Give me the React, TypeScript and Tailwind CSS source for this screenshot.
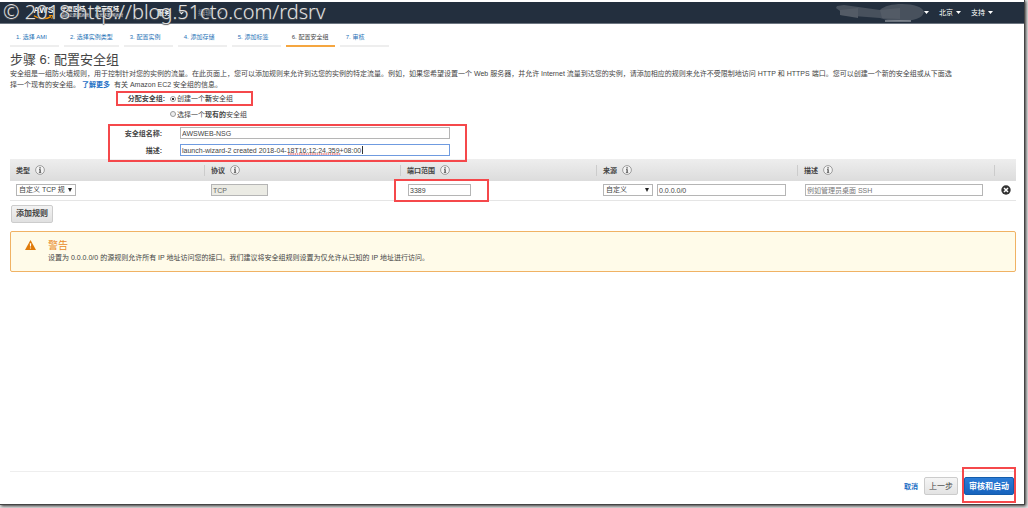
import React, { useState } from 'react';

const STEPS = ['选择 AMI', '选择实例类型', '配置实例', '添加存储', '添加标签', '配置安全组', '审核'];
const ACTIVE_STEP = 5;

const COLUMNS = [
  { label: '类型', width: 'w-[195px]' },
  { label: '协议', width: 'w-[196px]' },
  { label: '端口范围', width: 'w-[196px]' },
  { label: '来源', width: 'w-[201px]' },
  { label: '描述', width: 'w-[197px]' },
];

const Caret: React.FC = () => (
  <svg width="5" height="3" viewBox="0 0 5 3" className="shrink-0"><path d="M0 0h5L2.5 3z" fill="currentColor" /></svg>
);

const Chevron: React.FC = () => (
  <svg width="5" height="4" viewBox="0 0 5 4" className="shrink-0"><path d="M.5.7l2 2 2-2" fill="none" stroke="currentColor" strokeWidth="1.2" /></svg>
);

const InfoIcon: React.FC = () => (
  <svg width="10" height="10" viewBox="0 0 10 10" className="shrink-0">
    <circle cx="5" cy="5" r="4.4" fill="#f3f3f3" stroke="#8a8a8a" strokeWidth=".8" />
    <path d="M4.4 2.2h1.3v1.2H4.4zM4 4.2h1.7v2.9h.5v.7H3.9v-.7h.6V4.9H4z" fill="#444" />
  </svg>
);

const AwsLogo: React.FC = () => (
  <span className="flex flex-col items-center text-[9px] leading-[9px] font-bold text-white">
    AWS
    <svg width="21" height="5" viewBox="0 0 21 5">
      <path d="M1 .8c5 3.6 12 3.8 17 .8" fill="none" stroke="#f90" strokeWidth="1.3" />
      <path d="M16 .6l3.8-.2-1 3.4" fill="none" stroke="#f90" />
    </svg>
  </span>
);

// Red marker frame drawn over the part that the tutorial points at
const Marker: React.FC<{ className: string }> = ({ className }) => (
  <div className={`absolute border-2 border-[#f5484b] pointer-events-none ${className}`} />
);

const Dropdown: React.FC<{ id: string; label: string; text: string; className: string }> = ({ id, label, text, className }) => (
  <span className={`relative inline-flex h-[12px] ${className}`}>
    <select id={id} aria-label={label} className="w-full appearance-none border border-[#b5b5b5] bg-white pl-[2px] pr-[10px] text-[7px] leading-[10px] text-[#444]">
      <option>{text}</option>
    </select>
    <svg width="4" height="4" viewBox="0 0 4 4" className="absolute right-[4px] top-[4px] pointer-events-none"><path d="M0 0h4L2 4z" fill="#222" /></svg>
  </span>
);

const App: React.FC = () => {
  const [mode, setMode] = useState('new');
  const field = 'h-[12px] border border-[#b5b5b5] bg-white px-px text-[7px] leading-[10px] text-[#444] outline-none placeholder:text-[#777]';
  const button = 'h-[18px] rounded-[2px] border px-[4px] text-[8px] whitespace-nowrap';

  return (
    <div className="h-screen min-h-[300px] bg-[#e4e4e4] pr-[3px] pb-[3px] font-['Liberation_Sans','Noto_Sans_CJK_SC',sans-serif] text-[7px] leading-[11px] text-[#444]">
      <div className="flex h-full flex-col border-r border-b border-[#444] bg-white pt-[2px] shadow-[1px_1px_3px_#333]">
        {/* Top bar */}
        <header className="relative flex h-[22px] shrink-0 items-center border-b border-[#6c7580] bg-[#232f3e] pr-[31px] pl-[33px] text-white">
          <AwsLogo />
          <div className="ml-[7px] flex gap-[6px] text-[6px] leading-[7px]">
            <div><p className="font-bold">宁夏区域</p><p className="text-[4px] leading-[6px]">由西云数据运营</p></div>
            <div><p className="font-bold">北京区域</p><p className="text-[4px] leading-[6px]">由光环新网运营</p></div>
          </div>
          <button className="ml-[34px] flex items-center gap-[8px] font-bold">服务 <Chevron /></button>
          <button className="ml-[14px] flex items-center gap-[5px] text-[#8d949c]">编辑 <Chevron /></button>
          <div className="ml-auto flex items-center gap-[10px]">
            <button aria-label="账户" className="flex items-center">
              <svg width="88" height="18" viewBox="0 0 88 18" className="shrink-0">
                <path d="M1 2l7-1 36 5c4-4 12-6 22-6 12 0 21 3 22 8-1 6-10 9-24 9-8 0-15-1-20-3L4 11V7L0 4z" fill="#48515d" />
                <path d="M4 6l18-2v10L4 11zM44 6l20-2v11l-18-1z" fill="#535b66" />
                <path d="M49 17h26" stroke="#b6bbc0" />
              </svg>
              <Caret />
            </button>
            <button className="flex items-center gap-[3px]">北京 <Caret /></button>
            <button className="flex items-center gap-[3px]">支持 <Caret /></button>
          </div>
          <p className="absolute top-[-2px] left-[3px] font-['Noto_Sans'] text-[20px] leading-[24px] font-light whitespace-nowrap text-[#e0e0e0] [text-shadow:0_1px_1px_#555]">
            © 2018 http://blog.51cto.com/rdsrv
          </p>
        </header>

        {/* Wizard steps */}
        <nav className="mt-[8px] flex shrink-0 gap-[5px] pl-[10px]">
          {STEPS.map((step, i) => (
            <a
              key={step}
              href="#"
              className={`min-w-[49px] border-b-2 px-[6px] pb-[2px] text-[6px] leading-[11px] whitespace-nowrap ${i === ACTIVE_STEP ? 'border-[#f5a640] text-[#444]' : 'border-[#eee] text-[#1f73b7]'}`}
            >
              {i + 1}. {step}
            </a>
          ))}
        </nav>

        <main className="flex-1 pt-[5px] pr-[8px] pl-[10px]">
          <h1 className="text-[13px] leading-[16px]">步骤 6: 配置安全组</h1>
          <p>
            安全组是一组防火墙规则，用于控制针对您的实例的流量。在此页面上，您可以添加规则来允许到达您的实例的特定流量。例如，如果您希望设置一个 Web 服务器，并允许 Internet 流量到达您的实例，请添加相应的规则来允许不受限制地访问 HTTP 和 HTTPS 端口。您可以创建一个新的安全组或从下面选<br />
            择一个现有的安全组。<a href="#" className="mx-[2px] font-bold text-[#1e6fc5]">了解更多</a> 有关 Amazon EC2 安全组的信息。
          </p>

          <fieldset className="mt-px">
            <div className="flex h-[15px] items-center">
              <div className="relative ml-[106px] flex h-[15px] w-[137px] items-center">
                <Marker className="inset-0" />
                <legend className="w-[49px] text-right font-bold">分配安全组:</legend>
                <label className="ml-[5px] flex items-center">
                  <input type="radio" name="group" checked={mode === 'new'} onChange={() => setMode('new')} className="mr-px size-[6px] appearance-none rounded-full border border-[#999] bg-white checked:bg-[radial-gradient(#333_45%,#fff_55%)]" />
                  <span>创建一个<b>新</b>安全组</span>
                </label>
              </div>
            </div>
            <label className="ml-[160px] flex h-[16px] w-fit items-center">
              <input type="radio" name="group" checked={mode === 'existing'} onChange={() => setMode('existing')} className="mr-px size-[6px] appearance-none rounded-full border border-[#999] bg-[#eee] checked:bg-[radial-gradient(#333_45%,#fff_55%)]" />
              <span>选择一个<b>现有的</b>安全组</span>
            </label>
          </fieldset>

          <div className="relative mt-[2px] ml-[98px] flex h-[38px] w-[359px] flex-col gap-[5px] pt-[3px]">
            <Marker className="inset-0 z-10" />
            <div className="flex items-center">
              <label htmlFor="name" className="w-[54px] text-right font-bold">安全组名称:</label>
              <input id="name" defaultValue="AWSWEB-NSG" className={`${field} ml-[18px] w-[270px]`} />
            </div>
            <div className="flex items-center">
              <label htmlFor="desc" className="w-[54px] text-right font-bold">描述:</label>
              <div className="relative ml-[18px] flex w-[270px]">
                <input id="desc" defaultValue="launch-wizard-2 created 2018-04-18T16:12:24.359+08:00" className="h-[12px] w-full border border-[#6f9be0] bg-white px-px text-[7px] leading-[10px] text-[#444] outline-none" />
                <svg width="53" height="2" viewBox="0 0 53 2" className="absolute top-[9px] left-[108px]"><path d="M0 1h53" stroke="#e03c3c" strokeDasharray="1.5 .7" /></svg>
                <span className="absolute top-[2px] left-[182px] h-[8px] w-px bg-[#333]" />
              </div>
            </div>
          </div>

          {/* Inbound rules */}
          <table className="-mt-[3px] w-full table-fixed border-collapse">
            <thead>
              <tr className="h-[22px] bg-[linear-gradient(#eee,#dcdcdc)]">
                {COLUMNS.map((col) => (
                  <th key={col.label} className={`${col.width} p-0 text-left`}>
                    <div className="flex h-[11px] items-center gap-[5px] border-r border-[#ccc] pl-[6px]">{col.label} <InfoIcon /></div>
                  </th>
                ))}
                <th className="w-[21px] p-0" />
              </tr>
            </thead>
            <tbody>
              <tr className="h-[19px] border-b border-[#e5e5e5] [&>td]:p-0 [&>td]:pl-[6px]">
                <td><div className="flex"><Dropdown id="type" label="类型" text="自定义 TCP 规则" className="w-[60px]" /></div></td>
                <td><div className="flex"><input aria-label="协议" disabled value="TCP" className="h-[12px] w-[57px] border border-[#b5b5b5] bg-[#ebebe4] px-px text-[7px] leading-[10px] text-[#666]" /></div></td>
                <td>
                  <div className="relative flex pl-px">
                    <Marker className="-top-[5px] -left-[13px] h-[23px] w-[95px]" />
                    <input aria-label="端口范围" defaultValue="3389" className={`${field} w-[63px]`} />
                  </div>
                </td>
                <td>
                  <div className="flex gap-[4px] pr-[12px]">
                    <Dropdown id="source" label="来源" text="自定义" className="w-[50px] shrink-0" />
                    <input aria-label="来源地址" defaultValue="0.0.0.0/0" className={`${field} min-w-0 flex-1`} />
                  </div>
                </td>
                <td><div className="flex pr-[12px] pl-px"><input aria-label="描述" placeholder="例如管理员桌面 SSH" className={`${field} min-w-0 flex-1`} /></div></td>
                <td>
                  <button aria-label="删除" className="block">
                    <svg width="10" height="10" viewBox="0 0 10 10"><circle cx="5" cy="5" r="4.7" fill="#333" /><path d="M3 3l4 4M7 3L3 7" stroke="#fff" strokeWidth="1.5" /></svg>
                  </button>
                </td>
              </tr>
            </tbody>
          </table>

          <button className={`${button} mt-[4px] ml-[1px] block border-[#ccc] bg-[linear-gradient(#f3f3f3,#e0e0e0)] font-bold`}>添加规则</button>

          <section className="mt-[8px] flex h-[41px] gap-[12px] rounded-[2px] border border-[#f0b264] bg-[#fffbe9] pt-[8px] pl-[14px]">
            <svg width="11" height="10" viewBox="0 0 11 10" className="shrink-0"><path d="M5.5 0L11 10H0z" fill="#e07b0a" /><path d="M4.8 3.2h1.4L6 6.6H5zM4.9 7.4h1.2v1.2H4.9z" fill="#fff" /></svg>
            <div>
              <h2 className="text-[10px] leading-[12px] text-[#e98b2a]">警告</h2>
              <p>设置为 0.0.0.0/0 的源规则允许所有 IP 地址访问您的接口。我们建议将安全组规则设置为仅允许从已知的 IP 地址进行访问。</p>
            </div>
          </section>
        </main>

        <footer className="mr-[8px] ml-[10px] flex h-[33px] shrink-0 items-center justify-end gap-[6px] border-t border-[#eee] pb-[4px]">
          <a href="#" className="font-bold text-[#1e6fc5]">取消</a>
          <button className={`${button} border-[#ccc] bg-[linear-gradient(#f5f5f5,#e3e3e3)]`}>上一步</button>
          <div className="relative mr-[2px]">
            <Marker className="-inset-x-[2px] -top-[10px] -bottom-[8px]" />
            <button className={`${button} block border-[#145cab] bg-[linear-gradient(#2c7cd6,#1763bd)] font-bold text-white`}>审核和启动</button>
          </div>
        </footer>
      </div>
    </div>
  );
};

export default App;
